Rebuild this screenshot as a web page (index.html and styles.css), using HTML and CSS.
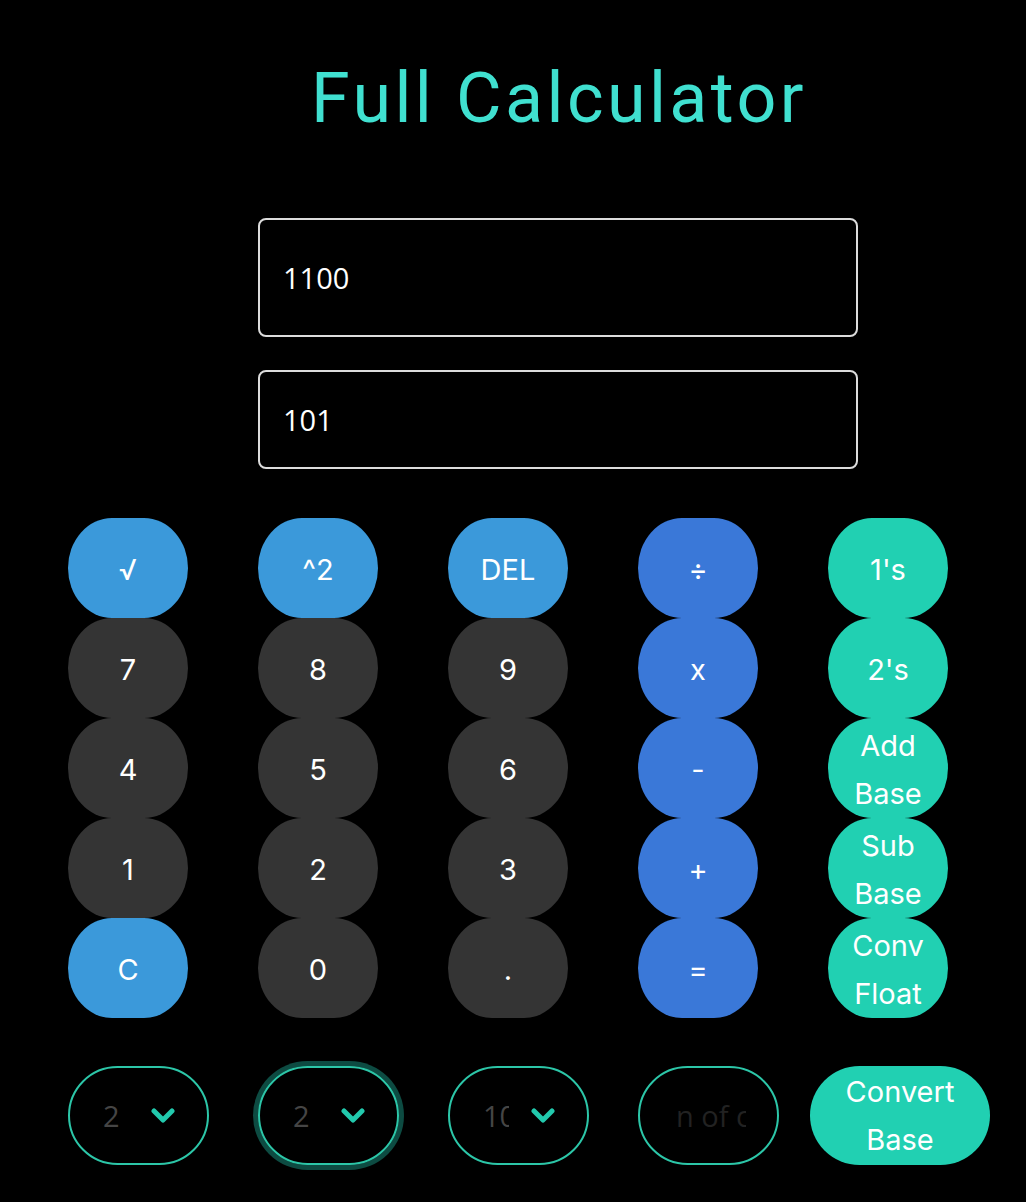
FILE: index.html
```html
<!DOCTYPE html>
<html lang="en">
<head>
<meta charset="utf-8">
<title>Full Calculator</title>
<link rel="stylesheet" href="styles.css">
</head>
<body>
<h1 class="title">Full Calculator</h1>
<div class="inputs">
  <div class="field field-main">1100</div>
  <div class="field field-second">101</div>
</div>
<div class="keys">
  <button class="key key-fn">√</button>
  <button class="key key-fn">^2</button>
  <button class="key key-fn">DEL</button>
  <button class="key key-op">÷</button>
  <button class="key key-base">1's</button>

  <button class="key key-num">7</button>
  <button class="key key-num">8</button>
  <button class="key key-num">9</button>
  <button class="key key-op">x</button>
  <button class="key key-base">2's</button>

  <button class="key key-num">4</button>
  <button class="key key-num">5</button>
  <button class="key key-num">6</button>
  <button class="key key-op">-</button>
  <button class="key key-base key-two">Add<br>Base</button>

  <button class="key key-num">1</button>
  <button class="key key-num">2</button>
  <button class="key key-num">3</button>
  <button class="key key-op">+</button>
  <button class="key key-base key-two">Sub<br>Base</button>

  <button class="key key-fn">C</button>
  <button class="key key-num">0</button>
  <button class="key key-num">.</button>
  <button class="key key-op">=</button>
  <button class="key key-base key-two">Conv<br>Float</button>
</div>
<div class="bottom">
  <div class="select">
    <span class="select-value">2</span>
    <svg class="chev" viewBox="0 0 24 16" width="24" height="16"><path d="M3 3 L12 12 L21 3" fill="none" stroke="#22c9ad" stroke-width="5" stroke-linecap="round" stroke-linejoin="round"/></svg>
  </div>
  <div class="select select-focus">
    <span class="select-value">2</span>
    <svg class="chev" viewBox="0 0 24 16" width="24" height="16"><path d="M3 3 L12 12 L21 3" fill="none" stroke="#22c9ad" stroke-width="5" stroke-linecap="round" stroke-linejoin="round"/></svg>
  </div>
  <div class="select">
    <span class="select-value">10</span>
    <svg class="chev" viewBox="0 0 24 16" width="24" height="16"><path d="M3 3 L12 12 L21 3" fill="none" stroke="#22c9ad" stroke-width="5" stroke-linecap="round" stroke-linejoin="round"/></svg>
  </div>
  <div class="select select-text">
    <span class="precision">n of c</span>
  </div>
  <button class="convert">Convert<br>Base</button>
</div>
</body>
</html>
```

FILE: styles.css
```css
html, body {
  margin: 0;
  padding: 0;
  background: #000;
}
body {
  width: 1026px;
  min-height: 1202px;
  font-family: Inter, "Noto Sans", sans-serif;
  color: #fff;
}
.title {
  margin: 0;
  padding-top: 62px;
  height: 72px;
  line-height: 72px;
  text-align: center;
  padding-left: 92px;
  font-family: Roboto, sans-serif;
  font-weight: 400;
  font-size: 70px;
  letter-spacing: 3.4px;
  color: #40e0d0;
}
.inputs {
  margin-top: 84px;
  margin-left: 258px;
  display: flex;
  flex-direction: column;
  gap: 33px;
}
.field {
  box-sizing: border-box;
  width: 600px;
  border: 2px solid #dcdcdc;
  border-radius: 8px;
  padding-left: 23px;
  display: flex;
  align-items: center;
  font-family: "Open Sans", sans-serif;
  font-size: 29px;
  color: #fff;
}
.field-main { height: 119px; }
.field-second { height: 99px; }
.keys {
  margin-top: 49px;
  margin-left: 68px;
  display: grid;
  grid-template-columns: repeat(5, 120px);
  grid-auto-rows: 100px;
  column-gap: 70px;
}
.key {
  border: none;
  border-radius: 44px / 50px;
  margin: 0;
  color: #fff;
  font-family: Inter, "Noto Sans", sans-serif;
  font-size: 29px;
  line-height: 48px;
  padding: 3px 0 0 0;
}
.key-fn { background: #3b99da; }
.key-num { background: #343434; }
.key-op { background: #3a78d8; }
.key-base { background: #21d0b2; }
.bottom {
  margin-top: 48px;
  margin-left: 68px;
  display: flex;
  gap: 49px;
  align-items: center;
}
.select {
  flex-shrink: 0;
  box-sizing: border-box;
  width: 141px;
  height: 99px;
  border: 2px solid #2cc6a8;
  border-radius: 50px;
  display: flex;
  align-items: center;
  padding-left: 33px;
  gap: 22px;
}
.select-focus {
  box-shadow: 0 0 0 5px #0d4b42;
}
.select-value {
  width: 26px;
  overflow: hidden;
  white-space: nowrap;
  font-family: "Open Sans", sans-serif;
  font-size: 29px;
  color: #454545;
}
.chev { display: block; }
.select-text { padding-left: 36px; }
.precision {
  width: 70px;
  overflow: hidden;
  white-space: nowrap;
  font-family: "Open Sans", sans-serif;
  font-size: 29px;
  color: #222;
}
.convert {
  flex-shrink: 0;
  margin-left: -18px;
  width: 180px;
  height: 99px;
  border: none;
  border-radius: 50px;
  background: #21d0b2;
  color: #fff;
  font-family: Inter, "Noto Sans", sans-serif;
  font-size: 29px;
  line-height: 48px;
  padding: 0;
}
```
